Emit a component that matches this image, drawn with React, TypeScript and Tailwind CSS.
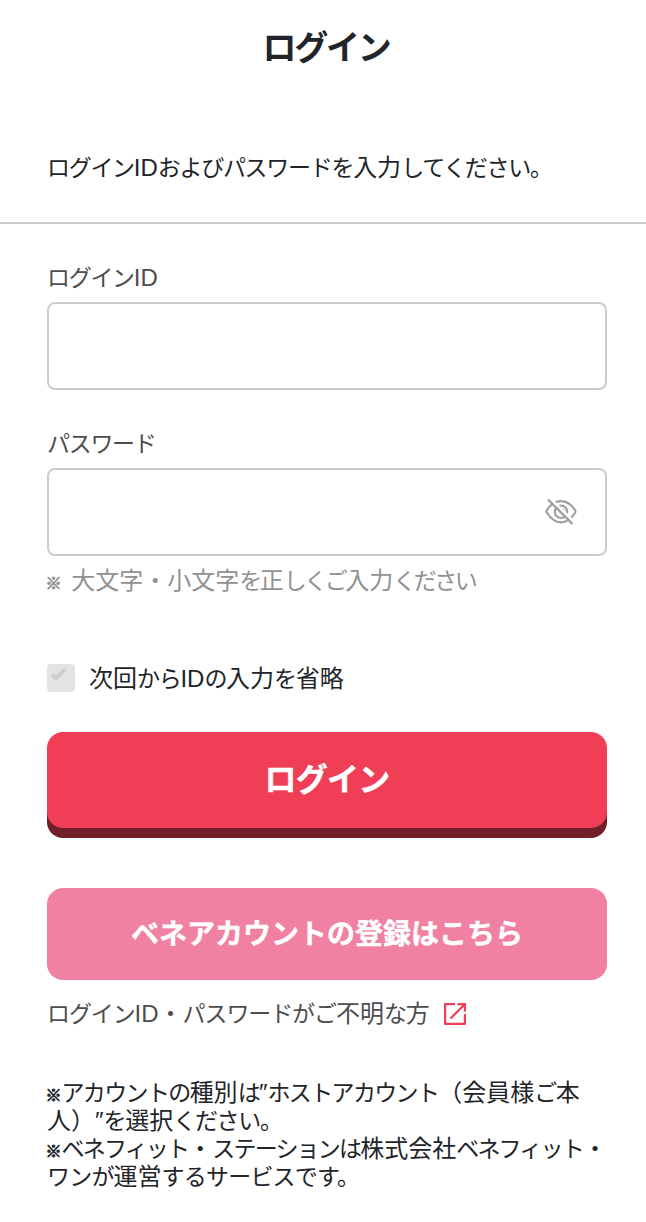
import { useState } from "react";

// Kana are set smaller and tighter than kanji, and the reference mark is small.
function Jp({ children, kana = "tracking-[-1.3px]" }: { children: string; kana?: string }) {
  const runs = children.match(/[ぁ-んァ-ヺー。]+|※|[^ぁ-んァ-ヺー。※]+/g) ?? [];
  return (
    <>
      {runs.map((run, i) => {
        if (run === "※") {
          return (
            <span
              key={i}
              className="-ml-[1.5px] text-[16px] font-bold [-webkit-text-stroke:0.9px_currentColor]"
            >
              {run}
            </span>
          );
        }
        return (
          <span key={i} className={/^[ぁ-んァ-ヺー]/.test(run) ? `text-[23px] ${kana}` : ""}>
            {run}
          </span>
        );
      })}
    </>
  );
}

function EyeOffIcon() {
  return (
    <svg viewBox="0 0 32 28" className="h-7 w-8" fill="none" stroke="#a0a0a0" strokeWidth="2.2">
      <path d="M1.800 14.500C1 13.500 1.200 13 2 12 6 6 10.500 3.200 16 3.200S26 6 30 12c.8 1.200.8 1.800 0 3-4 6-8.500 9.300-14 9.300S6 21 1.800 14.500Z" />
      <circle cx="16" cy="13.800" r="6.200" />
      <path d="M15.500 11.300a3 3 0 0 1 3.500 3.500" />
      <path d="M4 -.5 31 26" stroke="#fff" strokeWidth="3" />
      <path d="M3 1.500 27.500 26" strokeWidth="2.400" />
    </svg>
  );
}

function ExternalIcon() {
  return (
    <svg viewBox="0 0 22 22" className="h-[22px] w-[22px]" fill="none" stroke="#f03e58" strokeWidth="2.2">
      <path d="M11 1.100H1.100v19.800h19.800V11" strokeLinejoin="round" />
      <path d="M13.500 1.100h7.400v7.400M20.500 1.500 6.500 15.500" />
    </svg>
  );
}

export default function App() {
  const [loginId, setLoginId] = useState("");
  const [password, setPassword] = useState("");
  const [remember, setRemember] = useState(false);

  return (
    <div className="h-[1222px] overflow-hidden bg-white font-['Liberation_Sans','Noto_Sans_CJK_JP',sans-serif] text-[#212529]">
      <h1 className="pt-[25px] pl-1.5 text-center text-[34px] leading-[46px] font-bold tracking-[-2.2px]">
        ログイン
      </h1>
      <p className="mt-[77px] h-[41px] pl-[47px] text-2xl leading-10 whitespace-nowrap">
        <Jp>ログインIDおよびパスワードを入力してください。</Jp>
      </p>
      <hr className="mt-[33px] border-t-2 border-[#cccccc]" />
      <form className="pr-[39px] pl-[47px]" onSubmit={(e) => e.preventDefault()}>
        <label htmlFor="login-id" className="mt-9 block h-[37px] text-2xl leading-9 text-[#4d4d4d]">
          <Jp>ログインID</Jp>
        </label>
        <input
          id="login-id"
          value={loginId}
          onChange={(e) => setLoginId(e.target.value)}
          className="mt-[5px] block h-[88px] w-full rounded-lg border-2 border-[#ccc] px-4 text-2xl"
        />
        <label htmlFor="password" className="mt-9 block h-[37px] text-2xl leading-9 text-[#4d4d4d]">
          <Jp>パスワード</Jp>
        </label>
        <div className="mt-[5px] flex h-[88px] items-center rounded-lg border-2 border-[#ccc] pr-7">
          <input
            id="password"
            type="password"
            value={password}
            onChange={(e) => setPassword(e.target.value)}
            className="h-full min-w-0 flex-1 px-4 text-2xl outline-none"
          />
          <button type="button">
            <EyeOffIcon />
          </button>
        </div>
        <p className="mt-[9px] h-8 text-2xl leading-8 whitespace-nowrap text-[#919191]">
          <Jp>※</Jp>{" "}
          <span className="ml-[3px]">
            <Jp kana="tracking-[-2.5px]">大文字・小文字を正しくご入力ください</Jp>
          </span>
        </p>
        <label className="mt-[65px] flex h-8 items-center text-2xl leading-8">
          <input
            type="checkbox"
            checked={remember}
            onChange={(e) => setRemember(e.target.checked)}
            className="sr-only"
          />
          <span className="mr-3.5 h-7 w-7 rounded bg-[#e3e3e3]">
            <svg viewBox="0 0 28 28" fill="none" stroke="#cecece" strokeWidth="3.6">
              <path d="m5.500 10.500 3.500 4 9.200-9.500" />
            </svg>
          </span>
          <span className="h-8 pt-px whitespace-nowrap">
            <Jp>次回からIDの入力を省略</Jp>
          </span>
        </label>
        <button className="mt-[38px] block h-24 w-full rounded-2xl bg-[#f03e56] text-[32px] font-bold tracking-[-0.8px] text-white shadow-[0_10px_0_#731f2a] [-webkit-text-stroke:0.4px_white]">
          ログイン
        </button>
        <button
          type="button"
          className="mt-[60px] block h-[92px] w-full rounded-2xl bg-[#f181a2] pt-0.5 text-[28px] font-bold text-white [-webkit-text-stroke:0.4px_white]"
        >
          ベネアカウントの登録はこちら
        </button>
        <a href="#" className="mt-4 flex h-9 items-center gap-3.5 text-2xl text-[#4d4d4d]">
          <span className="h-8 whitespace-nowrap">
            <Jp kana="tracking-[-1.1px]">ログインID・パスワードがご不明な方</Jp>
          </span>
          <ExternalIcon />
        </a>
        <div className="mt-[47px] text-2xl leading-7 whitespace-nowrap">
          <p className="h-7">
            <Jp kana="tracking-[-1.65px]">※アカウントの種別は″ホストアカウント（会員様ご本</Jp>
          </p>
          <p className="h-7">
            <Jp kana="tracking-[-1.3px]">人）″を選択ください。</Jp>
          </p>
          <p className="h-7">
            <Jp kana="tracking-[-1.8px]">※ベネフィット・ステーションは株式会社ベネフィット・</Jp>
          </p>
          <p className="h-7">
            <Jp kana="tracking-[-0.8px]">ワンが運営するサービスです。</Jp>
          </p>
        </div>
      </form>
    </div>
  );
}
